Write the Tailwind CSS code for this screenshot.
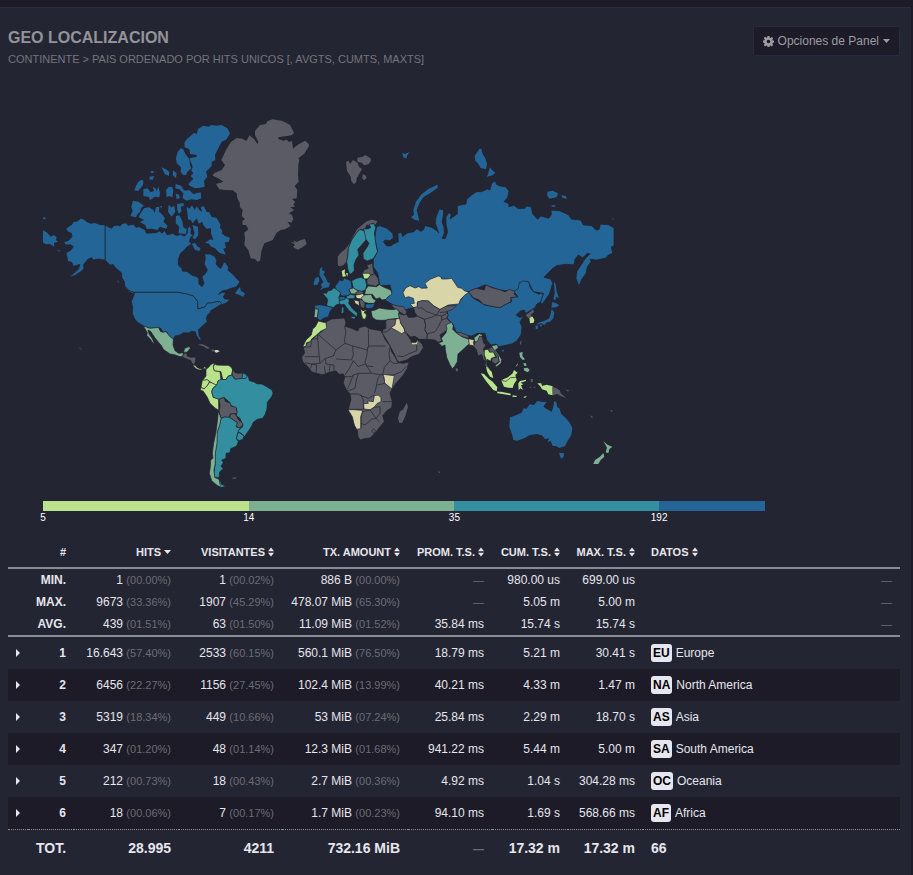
<!DOCTYPE html>
<html lang="es">
<head>
<meta charset="utf-8">
<meta name="viewport" content="width=device-width, initial-scale=1">
<title>Geo Localizacion</title>
<script src="https://cdn.jsdelivr.net/npm/@tailwindcss/browser@4"></script>
</head>
<body class="min-h-screen bg-[#1c1b27] pt-[7px] pr-[2px] font-['Liberation_Sans',Arial,sans-serif] text-[12px] leading-4 text-[#e6e6ec]">
<svg class="hidden" aria-hidden="true">
  <symbol id="sort" viewBox="0 0 6 10"><path d="M3 0.500 6 4.200H0zM3 9.500 0 5.800h6z" fill="currentColor"/></symbol>
  <symbol id="down" viewBox="0 0 7 4"><path d="M0 0h7L3.500 4z" fill="currentColor"/></symbol>
  <symbol id="right" viewBox="0 0 4 8"><path d="M0 0 4 4 0 8z" fill="currentColor"/></symbol>
</svg>
<main class="min-h-[868px] border-t border-[#2c2e40] bg-[#242533] pr-[11px] pl-2">
  <header class="flex items-start justify-between pt-[18px]">
    <div>
      <h2 class="pt-0.5 text-[16px] leading-5 font-bold text-[#939398]">GEO LOCALIZACION</h2>
      <p class="pt-[3px] text-[11px] leading-4 text-[#74747b]">CONTINENTE &gt; PAIS ORDENADO POR HITS UNICOS [, AVGTS, CUMTS, MAXTS]</p>
    </div>
    <button type="button" class="flex h-[30px] items-center gap-1 rounded-[2px] border border-[#272a40] bg-[#1c1b27] px-[9px] text-[12px] whitespace-nowrap text-[#9c9ca1]">
      <svg class="h-[11px] w-[11px]" viewBox="0 0 20 20" aria-hidden="true"><path fill="currentColor" fill-rule="evenodd" d="M8.300 0h3.400l.5 2.800 1.600.7 2.400-1.700 2.400 2.400-1.700 2.400.7 1.600 2.400.4v3.400l-2.400.5-.7 1.600 1.700 2.400-2.400 2.400-2.400-1.700-1.600.7-.5 2.400H8.300l-.5-2.400-1.600-.7-2.400 1.700-2.400-2.400 1.700-2.400-.7-1.600L0 11.600V8.300l2.400-.5.7-1.600-1.700-2.400 2.400-2.400 2.400 1.700 1.600-.7zM10 6.700a3.300 3.300 0 1 0 0 6.600 3.300 3.300 0 0 0 0-6.600z"/></svg>
      <span>Opciones de Panel</span>
      <svg class="h-1 w-[7px]" aria-hidden="true"><use href="#down"/></svg>
    </button>
  </header>

  <section class="max-w-[757px] pt-[50px] pl-[35px]" aria-label="Mapa">
    <svg class="block w-full" viewBox="43 117 722 384" role="img" aria-label="Hits por pais" stroke="#20212c" stroke-width="2" stroke-linejoin="round">
      <!-- North America -->
      <g transform="translate(30 110) scale(.33333)" fill="#246597">
        <g stroke="none">
        <path d="M463,98 470,88 482,78 492,68 500,72 504,57 520,47 535,50 545,45 560,47 575,45 592,55 600,70 590,88 575,95 565,115 555,135 556,150 545,155 545,168 528,185 532,200 522,212 524,230 510,233 495,235 480,228 475,222 490,206 482,198 490,190 484,182 488,170 478,145 500,140 500,135 480,132 478,118 464,112z"/>
        <path d="M452,115 460,118 466,132 478,148 480,165 484,175 472,185 468,195 458,194 452,186 453,172 440,160 438,145 443,125z"/>
        <path d="M437,222 455,228 458,236 465,242 478,240 490,252 512,247 514,265 500,270 485,268 470,272 458,265 460,250 448,238 436,235z"/>
        <path d="M394,172 408,178 418,186 417,198 405,193zM429,181 440,190 438,205 428,195zM362,184 370,183 371,189 363,189zM358,200 372,198 368,210 358,208zM313,241 318,228 325,215 335,209 341,213 338,227 324,243zM340,238 352,235 362,247 372,243 368,230 376,235 380,243 385,229 390,250 388,262 374,260 360,271 357,261 340,258zM408,240 417,230 427,231 430,243 427,262 417,258 410,262zM437,252 446,253 450,264 440,268zM301,318 308,304 304,290 309,272 325,275 342,287 334,293 330,305 322,313 318,322z"/>
        <path d="M330,312 342,295 357,292 370,300 374,310 378,292 388,290 387,305 395,312 405,325 400,335 413,348 408,356 390,350 382,360 365,356 350,357 346,345 330,337 342,329 326,322zM416,284 424,292 433,288 436,305 425,320 414,305zM390,287 396,289 394,296zM441,282 460,279 462,287 452,290 455,303 447,312 442,300z"/>
        <path d="M470,290 478,296 486,286 494,300 500,289 510,302 517,305 512,292 521,288 530,306 538,307 545,321 560,324 572,345 569,352 577,362 575,370 585,378 600,383 596,396 584,397 588,413 580,416 587,434 568,428 555,415 542,409 536,400 525,399 540,388 550,390 543,370 543,355 530,356 520,345 517,335 506,341 500,325 488,340 482,330 474,328z"/>
        <path d="M487,345 504,350 505,375 496,387 487,384 494,370zM486,402 495,398 503,410 512,414 508,423 495,420zM438,318 448,316 457,334 460,352 470,358 468,372 445,370 448,350 437,340z"/>
        <path d="M615,550 624,538 630,530 633,543 645,550 640,560 630,556zM38,360 50,367 62,380 72,375 80,382 77,390 85,395 72,398 73,410 60,402 50,403 39,398zM39,322 47,323 46,328 39,327zM80,420 91,422 89,425zM262,510 268,518 264,517zM288,533 303,540 313,551 300,545z"/>
        </g>
        <path d="M225,345 236,351 245,355 250,348 262,345 270,348 278,340 290,339 294,346 310,343 318,352 327,350 345,359 350,370 363,369 380,368 388,363 396,370 404,362 412,375 428,370 440,377 452,373 463,379 472,370 473,355 480,348 484,358 482,370 490,376 482,382 478,395 485,402 472,410 465,418 452,430 445,447 445,465 457,477 456,483 472,485 485,495 500,500 506,506 507,522 516,530 522,520 516,500 527,490 532,480 523,463 526,445 524,432 540,432 554,439 560,451 558,461 566,472 573,475 580,460 585,455 595,470 594,481 608,492 622,508 630,515 620,530 600,536 590,540 577,542 565,553 578,547 587,549 580,560 584,567 600,568 590,578 576,584 569,575 560,575 545,579 532,579 528,590 503,597 503,575 490,558 470,552 443,547 315,547 300,543 285,530 283,515 275,502 275,489 258,475 249,463 240,465 225,450z"/>
        <path d="M225,345 210,344 195,338 182,340 170,335 162,328 152,325 143,333 130,335 125,344 108,355 111,364 124,370 126,380 115,392 101,395 107,405 122,404 130,410 122,421 108,428 111,440 113,454 125,457 130,469 150,463 145,478 130,491 115,501 134,497 152,485 162,476 160,465 174,447 186,443 188,450 205,447 225,450z"/>
        <path d="M315,547 443,547 470,552 490,558 503,575 503,597 525,591 532,579 545,579 560,575 569,575 576,582 565,588 551,597 542,602 541,608 532,615 529,626 532,635 520,645 505,660 507,675 514,690 508,690 499,676 496,665 485,664 475,669 460,668 450,675 435,678 430,690 420,684 410,665 400,667 392,655 385,652 360,655 340,648 328,640 321,636 313,625 307,610 308,592 304,575z"/>
      </g>
      <!-- Latin America -->
      <g transform="translate(120 310) scale(.33333)">
        <path fill="#7eb193" d="M70,48 90,55 115,52 122,65 130,67 138,65 150,80 160,88 159,105 165,122 176,130 190,128 194,115 209,109 210,116 201,127 190,126 190,138 180,140 163,134 150,132 130,118 125,108 105,84 92,64 84,60 88,74 96,84 104,102 97,97 90,86 80,76 82,68z"/>
        <path fill="#5a5b64" d="M190,132 200,128 202,139 213,142 225,141 228,147 223,164 215,160 213,152 200,147 188,142z"/>
        <path fill="#b8e28b" stroke-width="1" d="M219,164 226,167 232,174 245,178 255,170 258,176 250,175 243,180 232,178 225,173z"/>
        <path fill="#5a5b64" stroke="none" d="M233,104 245,102 258,107 270,115 262,116 248,108zM336,503 350,502 347,506 338,506zM275,118 286,120 284,125 275,123z"/>
        <path fill="#d8d6a9" stroke="none" d="M286,120 293,120 299,124 290,128 284,126z"/>
        <path fill="#b8e28b" d="M258,178 266,172 272,164 284,158 280,170 283,182 300,185 303,210 294,213 294,228 280,222 262,210 247,212 258,198z"/>
        <path fill="#b8e28b" d="M247,211 262,209 269,216 262,227 252,237 243,232z"/>
        <path fill="#b8e28b" d="M243,232 252,237 262,227 269,216 290,225 279,235 275,245 280,262 296,266 296,301 285,294 270,280 262,262 250,244 241,240z"/>
        <path fill="#b8e28b" d="M284,162 290,165 305,166 325,166 334,172 338,180 335,195 324,199 318,209 308,208 303,185 283,182 280,172z"/>
        <path fill="#5a5b64" d="M338,178 345,188 355,190 368,189 368,205 355,207 345,208 336,195z"/>
        <path fill="#338fa0" d="M368,189 378,193 382,200 377,206 366,205z"/>
        <path fill="#338fa0" d="M290,225 294,213 302,208 318,209 324,199 335,195 345,208 366,205 377,206 384,195 388,212 402,216 412,222 425,222 440,230 456,240 459,250 455,260 442,277 441,295 436,312 428,325 412,328 400,337 394,350 386,362 373,380 364,370 352,365 368,350 366,340 360,325 350,318 350,295 330,285 330,278 312,262 297,268 280,262 275,245 279,235z"/>
        <path fill="#5a5b64" d="M297,268 312,262 316,274 330,279 333,288 348,292 352,308 345,312 332,312 326,323 314,321 303,325 297,303 300,288z"/>
        <path fill="#5a5b64" d="M332,312 345,311 351,320 356,330 368,340 369,348 358,354 347,348 352,338 328,322z"/>
        <path fill="#338fa0" d="M355,366 372,378 369,388 357,392 349,385z"/>
        <path fill="#338fa0" d="M303,325 314,321 328,322 352,338 348,350 358,354 368,346 355,362 349,385 355,395 350,408 332,416 330,428 318,430 318,445 305,450 310,458 303,468 309,476 299,486 297,503 284,502 282,488 286,460 285,435 290,400 290,370 300,340z"/>
        <path fill="#7eb193" d="M295,303 303,325 300,342 292,365 291,400 286,430 286,460 282,480 284,502 297,508 302,532 290,525 275,512 268,490 271,470 272,450 279,445 277,430 281,400 288,365 292,335z"/>
        <path fill="#338fa0" stroke="none" d="M299,511 303,523 315,529 302,532z"/>
      </g>
      <!-- North Atlantic and northern Europe -->
      <g transform="translate(210 110) scale(.33333)" fill="#5a5b64">
        <g stroke="none">
        <path d="M103,90 110,92 118,76 132,87 142,102 145,95 135,75 135,63 150,45 168,42 172,34 188,28 215,32 228,38 240,45 249,62 252,70 245,76 205,82 205,87 220,92 230,89 237,96 246,93 249,116 262,105 285,92 297,103 296,110 282,132 265,145 268,150 265,165 264,195 266,215 254,228 262,240 260,265 246,267 256,276 250,283 255,290 240,292 253,300 237,310 246,315 250,328 244,338 232,335 242,348 225,358 212,360 200,368 188,390 163,400 155,420 150,452 143,455 135,447 122,445 115,420 103,405 105,385 103,368 115,358 108,345 97,344 98,332 105,327 95,318 98,300 89,290 90,280 82,265 80,250 68,241 45,240 28,238 18,222 40,215 25,205 8,197 12,190 35,180 45,165 34,150 48,120 62,97 80,84 98,86z"/>
        <path d="M242,396 255,398 250,391 260,396 272,390 285,387 290,402 275,413 263,419 249,411 255,404zM408,155 416,153 420,162 429,150 442,158 448,172 456,177 440,205 439,215 432,223 424,213 422,200 411,182zM442,143 458,140 465,135 482,145 483,153 475,163 462,166 455,158 442,155zM458,193 466,196 470,203 463,211 457,206z"/>
        <path fill="#246597" d="M577,128 584,132 598,127 591,137 589,146 580,142z"/>
        <path fill="#246597" d="M330,476 337,470 336,480 346,485 340,493 348,505 352,516 360,520 356,532 342,534 329,541 337,531 332,524 340,516 334,505 328,495zM311,518 316,504 326,500 328,512 322,524 312,526z"/>
        </g>
        <path d="M382,465 382,440 392,427 405,417 418,400 430,375 440,358 455,345 470,333 485,328 503,332 498,345 487,340 480,347 470,345 465,360 450,358 440,368 425,390 415,415 414,435 410,455 400,467 388,470z"/>
        <path fill="#338fa0" d="M410,455 414,435 415,415 425,390 440,368 450,358 465,364 470,380 468,390 455,405 443,418 447,435 437,450 432,465 433,482 420,494 414,480z"/>
        <path fill="#338fa0" d="M461,356 472,357 482,353 478,342 492,341 497,352 493,370 497,390 498,405 503,425 490,446 472,453 460,447 459,430 472,410 477,400 468,388z"/>
        <path fill="#b8e28b" stroke="none" d="M395,483 405,478 404,488 408,499 398,500zM408,490 414,489 412,500z"/>
        <path d="M462,480 475,475 470,465 488,460 489,475 493,493 478,497 458,490z"/>
        <path fill="#b8e28b" d="M457,490 478,490 482,497 475,506 462,507z"/>
        <path d="M470,512 480,497 494,491 504,505 508,520 498,529 472,524z"/>
        <path fill="#246597" d="M375,530 385,515 388,510 398,513 402,504 423,512 426,535 417,540 423,550 413,557 395,558 388,545 377,543z"/>
        <path fill="#338fa0" d="M425,512 440,505 452,502 466,508 470,525 466,540 452,545 430,535z"/>
        <path fill="#338fa0" d="M337,549 350,550 353,543 364,541 372,533 392,548 387,562 392,580 378,585 370,593 350,587 353,568z"/>
      </g>
      <!-- Russia and Central Asia -->
      <g transform="translate(390 140) scale(.33333)">
        <g fill="#246597" stroke="none">
        <path d="M268,27 274,26 278,42 286,55 291,72 288,88 272,84 264,70 256,62 254,48zM300,82 308,92 316,98 308,106 291,110zM63,232 72,224 70,210 78,185 95,163 115,147 142,134 143,143 120,160 100,172 88,190 80,210 88,242 75,240zM472,155 488,152 504,160 500,172 478,176 472,167zM514,165 528,169 531,177 517,173zM485,196 496,196 496,200 485,200zM492,425 497,432 500,455 507,475 498,470 497,480 490,477 494,460z"/>
        </g>
        <path fill="#246597" d="M-40,260 -30,257 -10,265 8,280 10,293 0,302 -15,300 -20,305 -10,318 2,318 12,311 25,305 24,280 34,277 38,290 50,280 72,275 80,266 92,274 102,268 104,257 125,262 140,272 146,278 136,250 138,232 148,207 161,210 160,225 156,245 162,262 163,280 156,296 166,295 173,275 168,252 168,232 176,218 184,224 180,237 202,222 202,197 228,192 230,178 245,165 260,155 275,155 292,147 300,150 305,130 316,122 319,133 330,138 346,140 357,153 353,172 342,185 355,190 357,200 372,196 385,206 405,205 408,198 424,201 428,222 443,238 452,228 476,235 484,224 483,211 508,212 535,224 545,238 572,240 580,255 605,257 618,270 627,269 631,253 655,254 672,264 672,318 664,320 668,340 655,345 648,354 620,360 600,358 603,365 592,380 588,400 575,418 567,438 558,415 561,393 578,368 585,357 600,341 592,340 578,353 565,345 555,358 552,374 525,373 500,377 485,388 462,412 482,417 488,430 478,462 455,495 452,485 460,460 430,455 415,425 390,428 385,455 330,450 285,435 235,455 200,500 130,500 60,505 30,515 10,495 -15,480 5,455 0,435 -30,437 -37,400 -50,380 -50,358 -37,335 -45,295 -43,275z"/>
        <path fill="#246597" d="M210,485 220,468 235,455 250,475 285,495 330,503 347,493 365,485 362,473 384,470 372,455 385,445 388,428 400,423 415,425 422,445 430,455 445,462 460,460 452,485 440,493 435,503 420,512 408,520 402,510 392,513 378,525 388,532 400,530 390,545 396,563 393,585 380,603 365,612 350,615 327,620 318,612 303,615 290,600 285,580 262,580 245,588 215,585 198,575 190,555 172,535 172,515 185,500z"/>
        <path fill="#5a5b64" d="M235,455 258,445 283,450 287,434 305,443 325,448 345,455 360,448 375,455 372,463 384,470 362,473 363,485 347,493 330,503 300,498 280,493 268,480 250,473z"/>
        <path fill="#d8d6a9" d="M39,458 47,444 60,437 75,444 86,440 95,445 112,444 105,430 120,418 145,408 152,410 155,417 172,417 185,415 195,430 203,442 215,445 223,452 236,457 222,467 212,478 206,492 175,495 150,510 130,497 115,483 98,482 82,487 82,503 70,502 60,492 73,490 70,475 55,470 45,474z"/>
      </g>
      <!-- Southern Europe, Africa, Middle East -->
      <g transform="translate(290 260) scale(.33333)" fill="#5a5b64">
        <path fill="#246597" d="M74,136 90,134 110,138 129,143 120,155 115,170 103,174 90,182 82,175 85,148 74,147z"/>
        <path fill="#7eb193" d="M75,146 85,148 82,173 72,172z"/>
        <path fill="#338fa0" d="M147,122 160,117 172,112 178,120 176,130 188,147 203,160 200,170 190,162 175,150 163,133 150,134z"/>
        <path fill="#338fa0" stroke="none" d="M156,143 160,142 160,158 155,159zM182,171 195,170 193,177z"/>
        <path fill="#246597" d="M147,110 165,110 165,118 148,121z"/>
        <path fill="#338fa0" d="M168,110 182,103 196,106 193,116 172,116z"/>
        <path fill="#7eb193" d="M177,88 190,84 206,94 196,102 183,101z"/>
        <path d="M197,98 208,92 222,96 218,102 199,106z"/>
        <path fill="#d8d6a9" d="M196,106 218,101 223,107 212,117 200,115z"/>
        <path fill="#d8d6a9" d="M191,120 207,123 208,138 196,130z"/>
        <path d="M209,117 220,122 225,132 223,145 213,142 209,130z"/>
        <path fill="#7eb193" d="M213,115 223,105 243,103 250,117 258,120 253,130 235,130 222,126z"/>
        <path fill="#7eb193" d="M227,88 235,78 260,80 268,74 282,82 302,90 306,102 294,110 288,118 275,120 270,113 258,117 247,103 224,103z"/>
        <path fill="#246597" d="M226,132 240,132 254,130 250,143 234,146 226,143z"/>
        <path fill="#b8e28b" d="M212,146 218,152 232,149 222,157 230,165 226,178 218,176 214,163z"/>
        <path fill="#5a5b64" d="M302,132 325,138 340,140 350,155 346,166 335,160 325,153 312,145z"/>
        <path fill="#7eb193" d="M243,153 255,150 268,144 285,147 308,149 320,147 327,155 328,175 308,177 292,180 275,181 258,180 247,172z"/>
        <!-- African continent with inner borders -->
        <path d="M108,186 125,177 163,174 168,188 165,199 185,205 203,213 208,203 225,198 238,206 260,210 273,212 278,220 285,238 300,258 305,275 315,290 324,308 340,310 357,306 352,325 340,345 318,370 306,387 300,400 307,425 305,443 290,452 278,467 283,485 270,500 255,520 240,534 222,536 211,540 204,530 203,515 192,490 186,470 175,448 180,430 183,418 180,402 168,387 160,370 164,350 160,342 147,343 138,333 118,337 98,344 78,340 65,335 52,318 38,305 35,292 44,278 40,262 65,238 85,222 108,205z"/>
        <path fill="#b8e28b" d="M38,261 48,240 64,225 68,207 76,200 85,183 100,187 108,188 110,205 90,215 84,222 67,235 60,245 50,248 47,259z"/>
        <path fill="none" d="M40,262 62,260 65,238 83,235 83,222 112,248 138,270 165,250M83,235 88,290 45,290M138,270 130,288 106,295 90,310 88,290M163,199 168,215 163,240 165,250 188,258 232,270 233,262 236,262 235,207M236,258 286,258M188,258 190,285 185,300 138,297M232,270 230,290 225,305 230,318 250,320M190,302 205,320 225,312 230,318 245,340 278,345 283,322 300,302 297,280 300,262M165,345 178,325 190,302M106,295 108,312 132,315 132,335M90,310 65,312 45,308M106,340 103,318M118,337 120,315M78,340 80,315 65,312 62,325M190,345 205,340 225,340 245,340M205,340 198,365 195,385 175,392M164,350 185,350 190,345 178,375 172,388M180,402 205,402 215,408 235,415 253,405M253,400 258,385 262,360 270,345M262,375 285,370M306,385 285,370 280,345M307,425 278,425M175,448 220,448 220,420 213,405M213,505 213,475 217,455 240,450 252,442M213,490 225,495 245,478 258,475 240,450M252,442 270,440 270,460 258,475 268,485M278,345 310,345 335,335 350,318M300,302 310,310 325,310M245,513 251,506 257,512 251,520z"/>
        <path fill="#d8d6a9" d="M279,343 295,345 313,347 309,370 306,387 284,369 283,355z"/>
        <path fill="#d8d6a9" d="M221,431 235,430 233,423 250,425 253,407 265,405 273,413 273,425 262,430 252,442 240,449 222,447z"/>
        <path fill="#d8d6a9" d="M174,449 190,449 215,451 217,455 212,470 212,506 200,508 193,495 187,470z"/>
        <path stroke="none" d="M350,428 354,440 347,465 337,488 328,489 324,475 329,455 340,448z"/>
        <!-- Middle East -->
        <path d="M287,185 292,178 320,177 330,185 340,210 350,222 362,240 365,250 378,248 383,240 397,253 400,263 388,282 365,290 350,300 328,306 322,302 312,280 300,258 290,240 276,218 280,208 288,205z"/>
        <path fill="none" d="M276,218 290,215 303,205M322,288 340,290 355,282 380,272 380,255"/>
        <path fill="#d8d6a9" d="M303,203 315,195 318,177 331,175 333,190 342,205 345,215 335,221 320,212z"/>
        <path fill="#d8d6a9" stroke-width="1" d="M362,248 378,248 384,240 382,253 368,254z"/>
        <path d="M325,160 340,165 350,163 355,172 370,172 382,168 403,178 407,195 405,210 412,222 411,238 388,238 375,229 362,231 345,215 342,205 332,190z"/>
        <path d="M370,143 382,140 383,125 398,122 415,123 430,137 450,148 470,138 500,137 488,148 470,155 475,165 470,175 485,190 478,205 465,215 450,225 455,243 445,247 435,240 411,238 412,222 405,210 407,195 403,178 382,168 375,158z"/>
        <path fill="none" d="M383,145 395,143 410,155 425,160 440,165 450,148M403,178 425,172 440,165 455,168 472,160M412,222 435,215 445,200 455,180 470,175M455,168 455,180M450,158 470,155"/>
      </g>
      <!-- South and East Asia, Oceania -->
      <g transform="translate(430 300) scale(.33333)">
        <path fill="#5a5b64" d="M80,97 90,97 116,107 116,115 98,111 82,104z"/>
        <path fill="#7eb193" d="M132,113 148,101 158,105 150,115 142,127 134,125z"/>
        <path fill="#7eb193" d="M25,128 38,125 34,115 48,98 51,85 48,75 64,67 70,77 68,88 80,100 97,111 117,118 119,133 112,136 100,148 84,162 82,185 73,200 67,206 60,195 50,172 46,148 45,135 36,139z"/>
        <path fill="#d8d6a9" d="M116,116 133,120 130,128 134,140 126,136 118,135z"/>
        <path fill="#5a5b64" d="M134,127 142,125 149,108 158,112 160,128 168,135 160,147 165,160 163,170 170,188 160,178 155,163 145,168 138,148 131,140z"/>
        <path fill="#5a5b64" stroke="none" d="M77,203 84,207 84,214 78,214zM269,128 275,121 273,136z"/>
        <path fill="#7eb193" d="M185,137 202,134 205,143 196,150 205,163 215,178 213,190 198,202 196,196 208,186 204,170 188,148z"/>
        <path fill="#5a5b64" d="M176,145 187,142 205,168 207,185 196,192 186,186 186,175 200,172 192,158 178,156z"/>
        <path fill="#b8e28b" d="M163,150 174,148 179,157 190,156 197,170 184,175 182,184 172,178 169,195 180,208 173,206 166,195 170,183 163,165z"/>
        <g fill="#b8e28b" stroke="none">
        <path d="M168,200 176,206 185,215 190,234 180,230 172,217zM152,220 162,222 176,236 188,245 202,262 200,274 190,270 172,248 162,235zM200,275 212,275 228,278 242,281 242,286 222,283 203,280zM214,242 220,238 234,232 248,220 252,210 263,218 256,225 260,240 252,252 248,264 235,263 222,260zM265,250 270,243 288,239 288,243 272,248 280,253 273,256 279,270 271,265 266,271zM248,286 262,288 258,291 247,290zM280,291 291,287 285,294zM322,250 334,250 336,258 350,254 368,259 368,286 355,283 350,272 336,268 332,260zM298,52 308,50 313,60 311,68 300,70z"/>
        </g>
        <path fill="none" d="M216,242 228,244 242,233 258,232"/>
        <g fill="#5a5b64" stroke="none"><path d="M367,260 380,265 390,272 392,280 408,294 392,288 382,282 368,286zM287,45 300,36 309,28 312,36 302,45 307,50 295,55zM296,262 305,260 303,264zM310,260 318,261 312,264zM302,238 309,237 308,246 303,247zM406,268 420,273 412,274zM480,346 490,352 484,353zM540,332 548,330 546,335zM25,514 31,516 27,519z"/></g>
        <path fill="#7eb193" stroke="none" d="M268,158 278,156 277,168 285,178 278,180 270,171zM281,205 292,203 299,209 294,217 283,212zM280,190 287,189 290,197 283,198zM256,200 264,189 262,197zM520,423 530,433 547,441 538,447 535,460 527,457 531,443zM520,459 523,470 512,480 505,492 490,492 495,480 510,470z"/>
        <g fill="#246597" stroke="none"><path d="M367,6 377,9 388,16 378,22 364,23zM365,28 373,37 370,55 360,65 350,67 343,75 334,70 320,74 325,68 344,62 358,55 362,42zM316,77 324,77 323,88 317,86zM328,75 338,73 333,80zM215,150 222,149 219,158z"/>
        <path d="M240,352 252,348 275,338 281,325 290,326 299,313 312,315 322,303 334,305 349,306 340,320 350,327 365,335 370,320 373,303 379,307 382,322 388,325 394,342 408,355 420,370 427,385 424,405 412,424 405,438 388,444 378,438 368,438 362,423 352,427 358,415 345,417 336,406 320,402 298,406 284,414 262,422 250,420 247,405 238,380zM387,458 403,460 400,472 393,476z"/></g>
      </g>
      <path d="M79 348h2m-1 1h2M613 218v2" stroke="#5a5b64" stroke-width="1" opacity=".5"/>
    </svg>
    <div class="grid grid-cols-[206fr_206fr_205fr_106fr] text-[10px] leading-[14px] text-white">
      <div><div class="h-[10px] bg-[#bbe38e]"></div><span class="block w-max -translate-x-1/2">5</span></div>
      <div><div class="h-[10px] bg-[#7cb091]"></div><span class="block w-max -translate-x-1/2">14</span></div>
      <div><div class="h-[10px] bg-[#348fa0]"></div><span class="block w-max -translate-x-1/2">35</span></div>
      <div><div class="h-[10px] bg-[#246597]"></div><span class="block w-max -translate-x-1/2">192</span></div>
    </div>
  </section>

  <table class="mt-3 w-full table-fixed border-separate border-spacing-0 text-right whitespace-nowrap [&_i]:text-[11px] [&_i]:text-[#6c6c74] [&_i]:not-italic [&_td]:px-2 [&_th]:px-2">
    <colgroup><col class="w-5"><col class="w-[46px]"><col class="w-[105px]"><col class="w-[103px]"><col class="w-[126px]"><col class="w-[84px]"><col class="w-[76px]"><col class="w-[75px]"><col></colgroup>
    <thead>
      <tr class="h-8 text-[11px] [&_button]:inline-flex [&_button]:items-center [&_button]:gap-[3px] [&_button]:font-bold [&>*]:border-b-2 [&>*]:border-[#8b8c93]">
        <td></td><th scope="col">#</th>
        <th scope="col"><button type="button">HITS<svg class="h-1 w-[7px]" aria-hidden="true"><use href="#down"/></svg></button></th>
        <th scope="col"><button type="button">VISITANTES<svg class="h-[10px] w-[6px]" aria-hidden="true"><use href="#sort"/></svg></button></th>
        <th scope="col"><button type="button">TX. AMOUNT<svg class="h-[10px] w-[6px]" aria-hidden="true"><use href="#sort"/></svg></button></th>
        <th scope="col"><button type="button">PROM. T.S.<svg class="h-[10px] w-[6px]" aria-hidden="true"><use href="#sort"/></svg></button></th>
        <th scope="col"><button type="button">CUM. T.S.<svg class="h-[10px] w-[6px]" aria-hidden="true"><use href="#sort"/></svg></button></th>
        <th scope="col"><button type="button">MAX. T.S.<svg class="h-[10px] w-[6px]" aria-hidden="true"><use href="#sort"/></svg></button></th>
        <th scope="col" class="text-left"><button type="button">DATOS<svg class="h-[10px] w-[6px]" aria-hidden="true"><use href="#sort"/></svg></button></th>
      </tr>
    </thead>
    <tbody class="[&_tr]:h-[22px] [&_tr:last-child]:h-6 [&_tr:last-child>*]:border-b-2 [&_tr:last-child>*]:border-[#8b8c93]">
      <tr><td></td><th scope="row">MIN.</th><td>1 <i>(00.00%)</i></td><td>1 <i>(00.02%)</i></td><td>886 B <i>(00.00%)</i></td><td><i>—</i></td><td>980.00 us</td><td>699.00 us</td><td><i>—</i></td></tr>
      <tr><td></td><th scope="row">MAX.</th><td>9673 <i>(33.36%)</i></td><td>1907 <i>(45.29%)</i></td><td>478.07 MiB <i>(65.30%)</i></td><td><i>—</i></td><td>5.05 m</td><td>5.00 m</td><td><i>—</i></td></tr>
      <tr><td></td><th scope="row">AVG.</th><td>439 <i>(01.51%)</i></td><td>63 <i>(01.50%)</i></td><td>11.09 MiB <i>(01.52%)</i></td><td>35.84 ms</td><td>15.74 s</td><td>15.74 s</td><td><i>—</i></td></tr>
    </tbody>
    <tbody class="[&_b]:mr-1 [&_b]:inline-block [&_b]:rounded-[3px] [&_b]:bg-[#e6e6ee] [&_b]:px-0.5 [&_b]:leading-[18px] [&_b]:text-black [&_button]:block [&_td:last-child]:text-left [&_tr]:h-8 [&_tr:nth-child(even)]:bg-[#1c1b27]">
      <tr><td><button type="button" aria-label="Expandir Europe"><svg class="h-[8px] w-1" aria-hidden="true"><use href="#right"/></svg></button></td><th scope="row">1</th><td>16.643 <i>(57.40%)</i></td><td>2533 <i>(60.15%)</i></td><td>560.1 MiB <i>(76.50%)</i></td><td>18.79 ms</td><td>5.21 m</td><td>30.41 s</td><td><b>EU</b>Europe</td></tr>
      <tr><td><button type="button" aria-label="Expandir North America"><svg class="h-[8px] w-1" aria-hidden="true"><use href="#right"/></svg></button></td><th scope="row">2</th><td>6456 <i>(22.27%)</i></td><td>1156 <i>(27.45%)</i></td><td>102.4 MiB <i>(13.99%)</i></td><td>40.21 ms</td><td>4.33 m</td><td>1.47 m</td><td><b>NA</b>North America</td></tr>
      <tr><td><button type="button" aria-label="Expandir Asia"><svg class="h-[8px] w-1" aria-hidden="true"><use href="#right"/></svg></button></td><th scope="row">3</th><td>5319 <i>(18.34%)</i></td><td>449 <i>(10.66%)</i></td><td>53 MiB <i>(07.24%)</i></td><td>25.84 ms</td><td>2.29 m</td><td>18.70 s</td><td><b>AS</b>Asia</td></tr>
      <tr><td><button type="button" aria-label="Expandir South America"><svg class="h-[8px] w-1" aria-hidden="true"><use href="#right"/></svg></button></td><th scope="row">4</th><td>347 <i>(01.20%)</i></td><td>48 <i>(01.14%)</i></td><td>12.3 MiB <i>(01.68%)</i></td><td>941.22 ms</td><td>5.44 m</td><td>5.00 m</td><td><b>SA</b>South America</td></tr>
      <tr><td><button type="button" aria-label="Expandir Oceania"><svg class="h-[8px] w-1" aria-hidden="true"><use href="#right"/></svg></button></td><th scope="row">5</th><td>212 <i>(00.73%)</i></td><td>18 <i>(00.43%)</i></td><td>2.7 MiB <i>(00.36%)</i></td><td>4.92 ms</td><td>1.04 s</td><td>304.28 ms</td><td><b>OC</b>Oceania</td></tr>
      <tr><td><button type="button" aria-label="Expandir Africa"><svg class="h-[8px] w-1" aria-hidden="true"><use href="#right"/></svg></button></td><th scope="row">6</th><td>18 <i>(00.06%)</i></td><td>7 <i>(00.17%)</i></td><td>1.7 MiB <i>(00.23%)</i></td><td>94.10 ms</td><td>1.69 s</td><td>568.66 ms</td><td><b>AF</b>Africa</td></tr>
    </tbody>
    <tfoot class="text-[14px] font-bold">
      <tr class="h-[37px] [&>*]:border-t [&>*]:border-dotted [&>*]:border-[#8b8c93]"><td></td><th scope="row">TOT.</th><td>28.995</td><td>4211</td><td>732.16 MiB</td><td><i>—</i></td><td>17.32 m</td><td>17.32 m</td><td class="text-left">66</td></tr>
    </tfoot>
  </table>
</main>
</body>
</html>
